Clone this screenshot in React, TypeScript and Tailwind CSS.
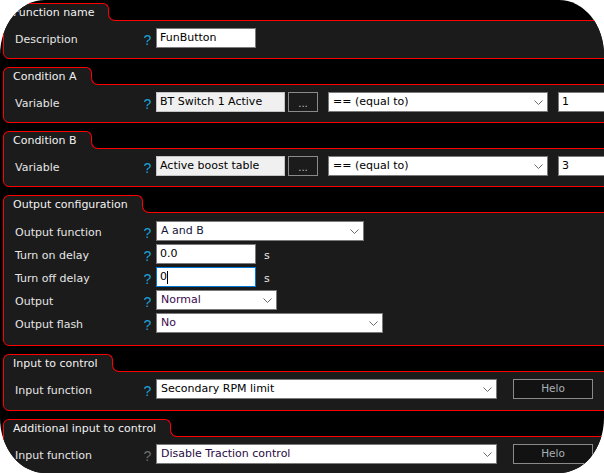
import React from 'react';

function Chevron() {
    return (
        <svg width="9" height="5" viewBox="0 0 9 5" fill="none" stroke="#6b6b6b" strokeWidth="1">
            <polyline points="0.5,0.5 4.5,4.5 8.5,0.5" />
        </svg>
    );
}

function Section({ title, children, body = 'pt-[7px] pb-[10px]' }: { title: string; children: React.ReactNode; body?: string }) {
    return (
        <section className="w-[700px]">
            <div className="flex items-end h-[17px]">
                <div className="relative z-10 h-[18px] -mb-px pl-[9px] pr-[14px] pt-[2px] flex items-center bg-[#1b1b1b] border-t border-l border-r border-[#ff0000] rounded-t-[6px] text-[#f2f2f2] whitespace-nowrap">
                    {title}
                </div>
                <div className="relative z-20 w-[7px] h-[7px] -ml-px -mb-px bg-[#1b1b1b]">
                    <div className="w-full h-full bg-black border-l border-b border-[#ff0000] rounded-bl-[7px]" />
                </div>
            </div>
            <div className={`bg-[#1b1b1b] border border-[#ff0000] rounded-b-[6px] flex flex-col gap-[3px] ${body}`}>{children}</div>
        </section>
    );
}

function Row({ label, muted = false, children }: { label: string; muted?: boolean; children: React.ReactNode }) {
    return (
        <div className="flex items-center h-[20px]">
            <div className="w-[135px] pl-[11px] pt-[4px] text-[#e6e6e6] whitespace-nowrap">{label}</div>
            <div className={`w-[17px] pt-[4px] text-center text-[14px] font-['Liberation_Sans',sans-serif] ${muted ? 'text-[#6e6e6e]' : 'text-[#1ba1d8]'}`}>?</div>
            <div className="flex items-center gap-[10px] h-full">{children}</div>
        </div>
    );
}

function Select({ value, className, tone = 'text-black' }: { value: string; className: string; tone?: string }) {
    return (
        <div className={`h-[20px] bg-white border border-[#7a7a7a] flex items-center justify-between pl-[4px] pr-[4px] ${className}`}>
            <span className={`whitespace-nowrap ${tone}`}>{value}</span>
            <Chevron />
        </div>
    );
}

function Field({ value, className, tone = 'bg-white border-[#7a7a7a]' }: { value: string; className: string; tone?: string }) {
    return (
        <div className={`h-[20px] border flex items-center pl-[3px] text-black whitespace-nowrap ${tone} ${className}`}>{value}</div>
    );
}

function VariableRow({ name, value }: { name: string; value: string }) {
    return (
        <Row label="Variable">
            <div className="flex items-center gap-[3px]">
                <Field value={name} className="w-[129px]" tone="bg-[#f0f0f0] border-[#c4c4c4]" />
                <button className="w-[30px] h-[20px] bg-[#1b1b1b] border border-[#8a8a8a] text-[#bdbdbd] text-[10px] leading-none pt-[4px]">...</button>
            </div>
            <Select value="== (equal to)" className="w-[220px]" />
            <Field value={value} className="w-[80px]" />
        </Row>
    );
}

function HelpButton() {
    return (
        <button className="ml-[6px] w-[80px] h-[20px] bg-[#121212] border border-[#8a8a8a] text-[#a9b0b4] text-[10.5px] flex items-center justify-center">
            Helo
        </button>
    );
}

export default function App() {
    return (
        <div className="w-[604px] h-[473px] bg-white">
            <div className="w-full h-full bg-black rounded-[45px/55px] overflow-hidden pt-[3px] pl-[3px] flex flex-col gap-[8px] font-['DejaVu_Sans',sans-serif] text-[11px]">
                <Section title="Function name">
                    <Row label="Description">
                        <Field value="FunButton" className="w-[100px]" />
                    </Row>
                </Section>

                <Section title="Condition A">
                    <VariableRow name="BT Switch 1 Active" value="1" />
                </Section>

                <Section title="Condition B">
                    <VariableRow name="Active boost table" value="3" />
                </Section>

                <Section title="Output configuration" body="pt-[8px] pb-[12px]">
                    <Row label="Output function">
                        <Select value="A and B" className="w-[208px]" tone="text-[#14143a]" />
                    </Row>
                    <Row label="Turn on delay">
                        <Field value="0.0" className="w-[100px]" />
                        <span className="text-[#e6e6e6] pt-[4px] -ml-[2px]">s</span>
                    </Row>
                    <Row label="Turn off delay">
                        <div className="w-[100px] h-[20px] bg-white border border-[#0078d7] flex items-center pl-[3px] text-black">
                            0<span className="w-px h-[13px] bg-black" />
                        </div>
                        <span className="text-[#e6e6e6] pt-[4px] -ml-[2px]">s</span>
                    </Row>
                    <Row label="Output">
                        <Select value="Normal" className="w-[121px]" tone="text-[#3a0a4e]" />
                    </Row>
                    <Row label="Output flash">
                        <Select value="No" className="w-[227px]" tone="text-[#3a0a4e]" />
                    </Row>
                </Section>

                <Section title="Input to control" body="pt-[7px] pb-[11px]">
                    <Row label="Input function">
                        <Select value="Secondary RPM limit" className="w-[341px]" />
                        <HelpButton />
                    </Row>
                </Section>

                <Section title="Additional input to control">
                    <Row label="Input function" muted>
                        <Select value="Disable Traction control" className="w-[341px]" tone="text-[#2a0a44]" />
                        <HelpButton />
                    </Row>
                </Section>
            </div>
        </div>
    );
}
